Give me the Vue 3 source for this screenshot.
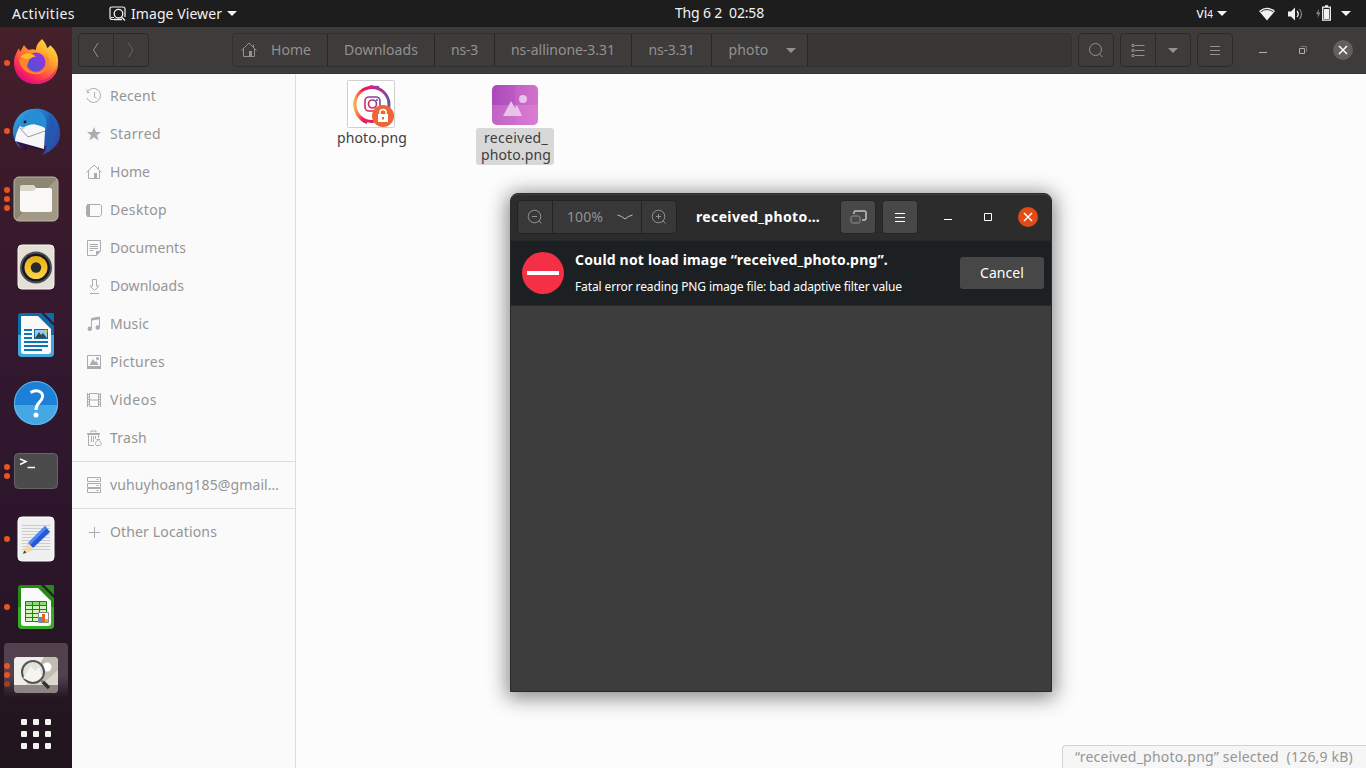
<script setup>
// Spreads a label's letters so that it occupies the given width.
const vFit = {
  mounted(el, { value }) {
    const range = document.createRange()
    range.selectNodeContents(el)
    const natural = range.getBoundingClientRect().width
    el.style.letterSpacing = `${(value - natural) / el.textContent.length}px`
  },
}

const places = [
  { name: 'Recent', w: 46, line: 'M1 3.5V1.5M1 4.5H3.5M1.3 4.2A7 7 0 1 1 1 10M8.5 4V9L10.5 10.5' },
  { name: 'Starred', w: 51, fill: 'M8 1L10 6H15L11 9.2L12.5 14.5L8 11.3L3.5 14.5L5 9.2L1 6H6Z' },
  { name: 'Home', w: 40, line: 'M.5 8.5L8 1L15.5 8.5M2.5 7V14.5H13.5V7M12.5 5V2.5', fill: 'M8 9H11V15H8Z' },
  { name: 'Desktop', w: 57, line: 'M2 2.5H14L15.5 4V12.5L14 14.5H2L.5 13V4Z', fill: 'M1 2H4V15H1Z' },
  { name: 'Documents', w: 76, line: 'M1.5.5H14.5V11L10.5 15.5H1.5ZM3.5 4.5H12M3.5 6.5H12M3.5 8.5H12M3.5 10.5H7', fill: 'M10 11H14.5L10 15.5Z' },
  { name: 'Downloads', w: 74, line: 'M6.5 1.5H10.5V8H13L8.5 12.5L4 8H6.5ZM4 15.5H13' },
  { name: 'Music', w: 39, line: 'M5.5 13V2.5L13.5 1V11M5.5 4L13.5 2.5', fill: 'M1.5 12.8A2 2 0 1 1 6 12.8A2 2 0 1 1 1.5 12.8M9.5 11.5A2 2 0 1 1 14 11.5A2 2 0 1 1 9.5 11.5M5 2.5L14 1V3L5 4.5Z' },
  { name: 'Pictures', w: 55, line: 'M1.5 1.5H14.5V14.5H1.5Z', fill: 'M1 12H15V15H1ZM3.5 11L7 5L9 8L10.5 7L12.5 11ZM10 4.5A1.5 1.5 0 1 1 13 4.5A1.5 1.5 0 1 1 10 4.5' },
  { name: 'Videos', w: 47, line: 'M3.5 1.5H12.5V14.5H3.5ZM3.5 8H12.5M1.5 1V15M14.5 1V15M1 2.5H4M1 5H4M1 7.5H4M1 10H4M1 12.5H4M12 2.5H15M12 5H15M12 7.5H15M12 10H15M12 12.5H15' },
  { name: 'Trash', w: 37, line: 'M1 3.5H14M1.5 4.5H13.5M5 2.5V1H10V2.5M2.5 5V15.5H8M12.5 5V8M5.5 6V12M7.5 6V12M9.5 6V9M10.5 9.5H14M12 10C9 12 8.5 15 11 15.5H13.5C16.5 15 15 12 12.5 10' },
]
const network = { name: 'vuhuyhoang185@gmail…', w: 169, line: 'M1.5.5H14.5V4.5H1.5ZM1.5 6.5H14.5V10.5H1.5ZM1.5 11.5H14.5V15.5H1.5ZM10.5 2.5H12.5M10.5 8.5H12.5M10.5 13.5H12.5' }
const other = { name: 'Other Locations', w: 107, line: 'M3 8.5H14M8.5 3V14' }
const groups = [places, [network], [other]]

const clock = 'Thg 6 2  02:58'
const statusText = '“received_photo.png” selected  (126,9 kB)'

const crumbs = [
  { name: 'Home', w: 40, cell: 95 },
  { name: 'Downloads', w: 74, cell: 107 },
  { name: 'ns-3', w: 27, cell: 60 },
  { name: 'ns-allinone-3.31', w: 104, cell: 137 },
  { name: 'ns-3.31', w: 46, cell: 80 },
  { name: 'photo', w: 40, cell: 96 },
]

const apps = [
  { id: 'firefox', dots: 1 }, { id: 'mail', dots: 1 }, { id: 'files', dots: 3 },
  { id: 'rhythmbox', dots: 0 }, { id: 'writer', dots: 0 }, { id: 'help', dots: 0 },
  { id: 'terminal', dots: 2 }, { id: 'editor', dots: 1 }, { id: 'calc', dots: 1 },
  { id: 'viewer', dots: 3 },
]
</script>

<template>
  <div class="screen">
    <header class="topbar">
      <div class="top-left">
        <span v-fit="63" class="activities">Activities</span>
        <svg class="app-glyph" width="17" height="16" viewBox="0 0 17 16" fill="none" stroke="#f2f2f2">
          <path d="M5 13.5H3Q1 13.5 1 11.5V3Q1 1 3 1H14Q16 1 16 3V11M2 11.5H5" stroke-width="1.2" />
          <circle cx="9.5" cy="7.7" r="4.3" stroke-width="1.3" /><path d="M12.5 11L16 14.5M5 13.5H13" stroke-width="1.3" />
        </svg>
        <span v-fit="91" class="app-name">Image Viewer</span>
        <i class="caret"></i>
      </div>
      <div v-fit="89" class="clock">{{ clock }}</div>
      <div class="top-right">
        <span class="lang">vi<small>4</small></span><i class="caret"></i>
        <svg class="wifi" width="16" height="14" viewBox="0 0 16 14"><path d="M0 4Q8-2.5 16 4L8 13.5Z" fill="#f2f2f2" /><path d="M1.8 4.8Q8 .2 14.2 4.8" fill="none" stroke="#222" stroke-width=".9" /></svg>
        <svg class="sound" width="16" height="14" viewBox="0 0 16 14" fill="none"><path d="M0 4.5H3L7 .5V13.5L3 9.5H0Z" fill="#f2f2f2" /><path d="M9 4Q11.5 7 9 10" stroke="#f2f2f2" stroke-width="1.3" /><path d="M11.5 2Q15.5 7 11.5 12" stroke="#888" stroke-width="1.2" /></svg>
        <svg class="battery" width="16" height="16" viewBox="0 0 16 16"><path d="M3 4L0 9H2L1.5 13L4.5 7.5H2.5Z" fill="#888" /><path d="M6.7 2.2H14.3V15.2H6.7ZM9 1H12" fill="none" stroke="#f2f2f2" stroke-width="1.3" /><path d="M8 4H13V14H8Z" fill="#f2f2f2" /></svg>
        <i class="caret"></i>
      </div>
    </header>

    <div class="desktop">
      <nav class="dock">
        <div v-for="app in apps" :key="app.id" class="dock-item" :class="{ active: app.id === 'viewer' }">
          <div class="dots"><i v-for="n in app.dots" :key="n"></i></div>
          <svg class="app-icon" width="50" height="50" viewBox="0 0 50 50">
            <defs>
              <linearGradient id="fox" x1="1" y1="0" x2=".3" y2="1"><stop offset="0" stop-color="#fff34d" /><stop offset=".4" stop-color="#ffa42b" /><stop offset=".75" stop-color="#ff3d4a" /><stop offset="1" stop-color="#e7037c" /></linearGradient>
              <linearGradient id="globe" x1="0" y1="1" x2="1" y2="0"><stop offset="0" stop-color="#3b5bd5" /><stop offset="1" stop-color="#a62be0" /></linearGradient>
              <linearGradient id="bird" x1="0" y1="0" x2="1" y2="1"><stop offset="0" stop-color="#3cb2e8" /><stop offset=".5" stop-color="#1c64bd" /><stop offset="1" stop-color="#3b3c9c" /></linearGradient>
              <linearGradient id="taupe" x1="0" y1="0" x2="1" y2="1"><stop offset=".5" stop-color="#8d8672" /><stop offset=".51" stop-color="#a19a87" /></linearGradient>
              <linearGradient id="gold" x1="0" y1="0" x2="0" y2="1"><stop offset="0" stop-color="#e5ad12" /><stop offset="1" stop-color="#ffd54a" /></linearGradient>
            </defs>
            <g v-if="app.id === 'firefox'">
              <path d="M31 1C34 4 36 8 36 10C38 9 39 8 39 7C44 11 48 18 47 25C47 38 37 46 25 46C12 46 3 37 3 25C3 18 6 14 8 10L9 14L13 7C15 10 16 11 18 12C20 11 23 11 25 12C25 7 28 4 31 1Z" fill="url(#fox)" />
              <path d="M4 30C8 42 19 44 27 43C37 42 44 35 46 28C45 39 36 46 25 46C14 46 6 40 4 30Z" fill="#e51580" opacity=".65" />
              <circle cx="25" cy="24" r="9.5" fill="url(#globe)" />
              <path d="M8 21C13 18 18 17 23 18C21 19 19 20 18 22C18 24 16 26 16 29C20 36 29 36 34 30C36 27 36 21 33 17C35 18 37 19 38 21C38 33 31 37 24 36C14 36 9 29 8 21Z" fill="#ff852d" />
              <path d="M9 19C15 13 22 15 25 19C21 18 20 22 15 21Z" fill="#ffba26" />
            </g>
            <g v-else-if="app.id === 'mail'">
              <path d="M2 28C1 13 12 3 22 3C37 1 50 12 49 29C49 37 42 45 31 49L34 45L35 40L5 33L10 43Q4 38 2 28Z" fill="url(#bird)" />
              <path d="M5 33L34 41L32 45L17 41L14 45L12 43L13 40L6 37Z" fill="#311047" />
              <path d="M9 20L20 17L33 21Q35 22 34 25L33 43L4 35Q5 26 9 20Z" fill="#f7f7fa" />
              <path d="M9 22L17 31L34 25" fill="none" stroke="#999" />
              <path d="M23 4C34 4 37 14 35 24C33 19 24 17 18 19C14 20 12 23 10 21C9 14 15 7 21 4Z" fill="#278dd4" />
              <path d="M38 9C48 18 45 35 37 47C34 29 41 21 38 9Z" fill="#2558ad" />
              <path d="M9 20L14 22L11 24Z" fill="#b9d8ea" /><circle cx="14" cy="16" r="1.4" fill="#122" />
            </g>
            <g v-else-if="app.id === 'files'"><rect x="3" y="3" width="44" height="44" rx="5" fill="url(#taupe)" stroke="#bcb6a6" /><path d="M11 11H23L25 14H38Q41 14 41 17V36Q41 38 38 38H12Q9 38 9 35V13Q9 11 11 11Z" fill="#d9d5c8" /><path d="M9 17H22Q24 17 25 14H39Q41 14 41 17V36Q41 38 38 38H12Q9 38 9 35Z" fill="#faf9f7" /></g>
            <g v-else-if="app.id === 'rhythmbox'"><rect x="7" y="3" width="36" height="44" rx="4" fill="#e5e0d5" stroke="#f6f4f0" /><circle cx="25" cy="25.5" r="16" fill="#4c4f58" /><circle cx="25" cy="25.5" r="14" fill="#171923" /><circle cx="25" cy="25.5" r="11.5" fill="url(#gold)" /><circle cx="25" cy="25.5" r="5.2" fill="#27292b" /></g>
            <g v-else-if="app.id === 'writer' || app.id === 'calc'" :class="app.id">
              <path class="frame" d="M10 3H30L43 16V43Q43 47 39 47H11Q7 47 7 43V6Q7 3 10 3Z" /><path class="lower" d="M7 25H43V43Q43 47 39 47H11Q7 47 7 43Z" />
              <path d="M11 6H27L40 19V41Q40 44 37 44H13Q10 44 10 41V7Q10 6 11 6Z" fill="#fafafa" /><path class="frame" d="M33 3H42Q43 3 43 4V13Z" />
              <template v-if="app.id === 'writer'"><path d="M13 20H21M13 24H21M13 28H21M13 32H37M13 36H37M13 40H31" stroke="#0c75b5" stroke-width="2" /><rect x="23.5" y="19.5" width="13" height="9" fill="#8bd0f4" stroke="#0c6aa5" /><path d="M24 28L28 22L30 25L32 23L36 28Z" fill="#444" /><circle cx="35" cy="21" r="1.5" fill="#f6c421" /></template>
              <template v-else><path d="M14.5 19.5H35.5V39.5H14.5Z" fill="#d3f5bf" stroke="#228010" /><path d="M15 20H35V23H15Z" fill="#8bdc78" /><path d="M14 23.5H36M14 27.5H36M14 31.5H36M14 35.5H36M21.5 20V40M28.5 20V40" stroke="#228010" /><path d="M27.5 30.5H37.5V40.5H27.5Z" fill="#fff" stroke="#888" /><path d="M29.5 40V35" stroke="#2ba3df" stroke-width="3" /><path d="M32.5 40V32" stroke="#e9612c" stroke-width="3" /><path d="M35.5 40V37" stroke="#ecb700" stroke-width="3" /></template>
            </g>
            <g v-else-if="app.id === 'help'"><circle cx="25" cy="25" r="22" fill="#1d80d8" /><path d="M3 27A22 20 0 0 0 47 27Z" fill="#46a7e5" /><circle cx="25" cy="25" r="21.5" fill="none" stroke="#65b9ec" /><path d="M19.5 14.5C25 11 32 13 31.5 19C31 24 25 24 25 32" fill="none" stroke="#fff" stroke-width="3" /><circle cx="25" cy="37" r="2.5" fill="#fff" /></g>
            <g v-else-if="app.id === 'terminal'"><rect x="3.5" y="7.5" width="43" height="35" rx="4" fill="#4b4b4b" stroke="#666" /><path d="M9 13L15 15.5L9 18.5M16.5 21.5H24" fill="none" stroke="#fff" stroke-width="1.5" /></g>
            <g v-else-if="app.id === 'editor'"><rect x="7" y="3" width="36" height="44" rx="4" fill="#f0f0f0" stroke="#fff" /><path d="M11 11.5H39M11 14.5H39M11 17.5H39M11 20.5H39M11 23.5H39M11 26.5H39M11 29.5H39M11 32.5H39M11 35.5H39" stroke="#ccc" /><path d="M12 40L15 32L21 37Z" fill="#f4d8b0" /><path d="M12 40L13.2 36.5L15.5 38.5Z" fill="#443" /><path d="M17 29L34 12L39 18L22 34Z" fill="#255ad5" /><path d="M17 29L34 12L36 14L19 31Z" fill="#508af1" /><path d="M17 29L22 34L18 36L14.5 33Z" fill="#f4d8b0" /></g>
            <g v-else><path d="M7 7H43Q47 7 47 11V39Q47 43 43 43H7Q3 43 3 39V11Q3 7 7 7Z" fill="#dad7ce" /><path d="M30 7H43Q47 7 47 11V20L30 35Z" fill="#c1bdaf" /><path d="M3 11Q3 7 7 7H33L15 35H3Z" fill="#efeee9" /><circle cx="36" cy="17" r="4.5" fill="#fff" /><circle cx="22" cy="22" r="11" fill="#e4e2dc" stroke="#555" stroke-width="2" /><path d="M12 28L20 16L24 21L28 17L31 26Q24 35 14 29Z" fill="#f6f5f2" /><path d="M30 30L33 33" stroke="#777" stroke-width="2" /><path d="M3 35H47V39Q47 43 43 43H7Q3 43 3 39Z" fill="#30202b" opacity=".45" /><path d="M32 32L38 38" stroke="#333" stroke-width="3.5" /></g>
          </svg>
        </div>
        <div class="app-grid"><i v-for="n in 9" :key="n"></i></div>
      </nav>

      <section class="files">
        <header class="files-head">
          <div class="button-group nav-buttons"><button><svg width="8" height="16" viewBox="0 0 8 16"><path d="M6 1L1.5 8L6 15" /></svg></button><button class="dim"><svg width="8" height="16" viewBox="0 0 8 16"><path d="M1.5 1L6 8L1.5 15" /></svg></button></div>
          <div class="pathbar">
            <div v-for="(crumb, i) in crumbs" :key="crumb.name" class="crumb" :style="{ width: crumb.cell + 'px' }">
              <svg v-if="i === 0" class="house" width="16" height="16" viewBox="0 0 16 16"><path :d="places[2].line" /><path :d="places[2].fill" class="solid" /></svg>
              <span v-fit="crumb.w">{{ crumb.name }}</span>
              <i v-if="i === 5" class="caret"></i>
            </div>
          </div>
          <button class="single search"><svg width="16" height="16" viewBox="0 0 16 16"><circle cx="7.5" cy="7.5" r="6" /><path d="M11.5 12L14.5 15" /></svg></button>
          <div class="button-group view-buttons"><button><svg width="14" height="13" viewBox="0 0 14 13"><path d="M4 1.5H13.5M4 6.5H13.5M4 11.5H13.5M1 .5H3V2.5H1ZM1 5.5H3V7.5H1ZM1 10.5H3V12.5H1Z" /></svg></button><button><i class="caret"></i></button></div>
          <button class="single"><svg width="12" height="11" viewBox="0 0 12 11"><path d="M1 1.5H11M1 5.5H11M1 9.5H11" /></svg></button>
          <div class="controls files-controls"><svg width="8" height="8" viewBox="0 0 8 8"><path d="M0 6.5H8" /></svg><svg width="8" height="8" viewBox="0 0 8 8"><path d="M.5 2.5H5.5V7.5H.5Z" /><path class="back-frame" d="M2 .5H7.5V6" /></svg><div class="close"><svg width="10" height="10" viewBox="0 0 10 10"><path d="M1 1L9 9M9 1L1 9" /></svg></div></div>
        </header>
        <div class="files-body">
          <aside class="sidebar">
            <div v-for="(group, g) in groups" :key="g" class="group">
              <div v-for="p in group" :key="p.name" class="place">
                <svg width="16" height="16" viewBox="0 0 16 16"><path v-if="p.line" :d="p.line" /><path v-if="p.fill" :d="p.fill" class="solid" /></svg>
                <span v-fit="p.w">{{ p.name }}</span>
              </div>
            </div>
          </aside>
          <main class="content">
            <div class="file first">
              <svg width="48" height="48" viewBox="0 0 48 48">
                <defs><linearGradient id="insta" x1="0" y1="1" x2="1" y2="0"><stop offset="0" stop-color="#e0245c" /><stop offset=".5" stop-color="#c42a80" /><stop offset="1" stop-color="#674ca6" /></linearGradient><linearGradient id="ring"><stop offset="0" stop-color="#ffb34e" /><stop offset=".35" stop-color="#f51755" /><stop offset=".7" stop-color="#c3298b" /><stop offset="1" stop-color="#6553a6" /></linearGradient></defs>
                <rect x=".5" y=".5" width="47" height="47" rx="1" fill="#fff" stroke="#d0d0ce" />
                <circle cx="25" cy="24.5" r="17" fill="none" stroke="url(#ring)" stroke-width="3" /><path d="M32 7Q10 5 7 24Q9 39 20 43M23 6L31 8M9 34L19 41" fill="none" stroke="url(#ring)" stroke-width="2" />
                <rect x="18" y="17" width="15" height="14" rx="4" fill="none" stroke="url(#insta)" stroke-width="1.6" /><circle cx="25.5" cy="24" r="4" fill="none" stroke="url(#insta)" stroke-width="1.7" /><circle cx="30" cy="20" r="1" fill="#7946a2" />
                <circle cx="36" cy="36" r="11" fill="#eb6536" /><path d="M33 35V32Q33 29.5 36 29.5Q39 29.5 39 32V35" fill="none" stroke="#fff" stroke-width="1.5" /><path d="M31 34H41V42H31ZM35 37V39.5H37V37Z" fill="#fff" fill-rule="evenodd" />
              </svg>
              <div class="file-name"><span v-fit="70">photo.png</span></div>
            </div>
            <div class="file second">
              <svg width="46" height="48" viewBox="0 0 46 48"><defs><linearGradient id="pink"><stop offset="0" stop-color="#aa49b9" /><stop offset="1" stop-color="#cf6bcb" /></linearGradient></defs><rect y="5" width="46" height="40" rx="5" fill="url(#pink)" /><path d="M0 25H46V40Q46 45 41 45H5Q0 45 0 40Z" fill="#e994dc" opacity=".35" /><path d="M23 5H41Q46 5 46 10V40Q46 45 41 45H23Z" fill="#e98bdb" opacity=".15" /><path d="M11 36L19 21L23 28L25 25L30 36Z" fill="#e9c2e9" /><circle cx="31" cy="19" r="4" fill="#e9c2e9" /></svg>
              <div class="file-name selected"><span v-fit="64">received_</span><span v-fit="70">photo.png</span></div>
            </div>
            <div class="status"><span v-fit="278">{{ statusText }}</span></div>
          </main>
        </div>
      </section>
    </div>

    <section class="viewer-window">
      <header class="viewer-head">
        <div class="button-group zoom"><button><svg width="16" height="16" viewBox="0 0 16 16"><circle cx="7.5" cy="7.5" r="6.3" /><path d="M5 7.5H10M12 12L14.5 14.5" /></svg></button><button class="percent"><span v-fit="36">100%</span><svg width="16" height="8" viewBox="0 0 16 8"><path d="M.5 2Q5 3 8 6Q11 3 15.5 2" /></svg></button><button><svg width="16" height="16" viewBox="0 0 16 16"><circle cx="7.5" cy="7.5" r="6.3" /><path d="M5 7.5H10M7.5 5V10M12 12L14.5 14.5" /></svg></button></div>
        <div class="title"><span v-fit="124">received_photo…</span></div>
        <button class="single lit gallery"><svg width="17" height="14" viewBox="0 0 17 14"><path d="M4 4V2Q4 1 5 1H15Q16 1 16 2V9Q16 10 15 10H12" /><rect class="muted" x="1" y="6" width="9" height="7" rx="1.5" /></svg></button>
        <button class="single lit"><svg width="12" height="11" viewBox="0 0 12 11"><path d="M1 1.5H11M1 5.5H11M1 9.5H11" /></svg></button>
        <div class="controls viewer-controls"><svg width="8" height="8" viewBox="0 0 8 8"><path d="M0 6.5H8" /></svg><svg width="8" height="8" viewBox="0 0 8 8"><path d="M.5.5H7.5V7.5H.5Z" /></svg><div class="close orange"><svg width="10" height="10" viewBox="0 0 10 10"><path d="M1 1L9 9M9 1L1 9" /></svg></div></div>
      </header>
      <div class="alert">
        <div class="no-entry"><i></i></div>
        <div class="message"><strong><span v-fit="313">Could not load image “received_photo.png”.</span></strong><p><span v-fit="327">Fatal error reading PNG image file: bad adaptive filter value</span></p></div>
        <button class="cancel"><span v-fit="44">Cancel</span></button>
      </div>
    </section>
  </div>
</template>

<style>
body { margin: 0; overflow: hidden; }
</style>

<style scoped>
* { box-sizing: border-box; }
.screen { position: relative; width: 1366px; height: 768px; overflow: hidden; font: 14px/20px "Noto Sans", sans-serif; background: #fcfcfc; }
span, .clock { white-space: pre; }
svg { display: block; flex: none; }
button { font: inherit; padding: 0; margin: 0; border: 0; background: none; color: inherit; display: flex; align-items: center; justify-content: center; }
.caret { display: block; border: 5px solid transparent; border-top-color: currentColor; border-bottom: 0; flex: none; }
.topbar { height: 27px; background: #1d1d1d; color: #f2f2f2; display: flex; align-items: center; }
.top-left { display: flex; align-items: center; padding-left: 12px; width: 675px; }
.activities { width: 63px; margin-right: 34px; }
.app-glyph { margin-right: 5px; }
.app-name { width: 91px; margin-right: 5px; }
.clock { width: 90px; margin-top: -1px; }
.top-right { flex: 1; display: flex; align-items: center; justify-content: flex-end; padding-right: 15px; }
.lang small { font-size: 10px; }
.lang { margin-right: 4px; }
.wifi { margin: 0 13px 0 32px; }
.sound { margin-right: 12px; }
.battery { margin-right: 9px; margin-top: -2px; }

.desktop { display: flex; height: 741px; }
.dock { width: 72px; padding-top: 2px; background: linear-gradient(#46202a, #3b1b2a 18%, #33182f 42%, #2a1529 75%, #21151d); }
.dock-item { position: relative; height: 68px; display: flex; align-items: center; justify-content: center; }
.active::before { content: ""; position: absolute; left: 4px; top: 2px; width: 64px; height: 55px; border-radius: 4px 4px 0 0; background: linear-gradient(#51424e 60%, #51424e00); }
.dots { position: absolute; z-index: 1; left: 4px; top: 0; bottom: 0; display: flex; flex-direction: column; justify-content: center; gap: 3px; }
.dots i { width: 6px; height: 6px; border-radius: 50%; background: #e95420; }
.active .dots i:last-child { background: #994125; }
.app-icon { position: relative; }
.writer .frame { fill: #0c6da8; } .writer .lower { fill: #42a7da; }
.calc .frame { fill: #258b15; } .calc .lower { fill: #38ac29; }
.app-grid { display: grid; grid-template-columns: repeat(3, 6px); gap: 6px; width: 30px; margin: 10px auto 0; }
.app-grid i { width: 6px; height: 6px; border-radius: 1px; background: #f2f2ee; }

.files { flex: 1; display: flex; flex-direction: column; }
.files-head { height: 47px; padding: 6px 13px 0 6px; display: flex; align-items: flex-start; background: #3e3c3a; color: #929190; border-bottom: 1px solid #383634; }
.files-head svg, .sidebar svg, .viewer-head svg { fill: none; stroke: currentColor; stroke-width: 1; }
.files-head .solid, .sidebar .solid { fill: currentColor; stroke: none; }
.button-group, .single, .pathbar { height: 34px; border: 1px solid #2c2a28; border-radius: 4px; display: flex; flex: none; }
.button-group > button { flex: 1; }
.button-group > button + button { border-left: 1px solid #2c2a28; }
.single { width: 36px; }
.nav-buttons { width: 71px; margin-right: 83px; }
.nav-buttons .dim { color: #686765; }
.pathbar { width: 840px; background: #393735; border-color: #32302e; margin-right: 6px; overflow: hidden; }
.crumb { display: flex; align-items: center; justify-content: center; background: #3e3c3a; border-right: 1px solid #292725; flex: none; }
.crumb:first-child { padding-right: 8px; }
.crumb:last-child { padding-left: 5px; }
.house { margin: 0 14px 0 0; }
.crumb .caret { margin-left: 17px; }
.search { margin-right: 6px; }
.view-buttons { width: 71px; margin-right: 6px; }
.controls { display: flex; align-items: center; height: 34px; margin-left: auto; }
.files-controls { gap: 32px; color: #b2b1ae; }
.files-controls .back-frame { stroke: #777572; }
.files-controls .close { margin-left: -6px; background: #62605f; color: #fff; }
.close { width: 20px; height: 20px; border-radius: 50%; display: flex; align-items: center; justify-content: center; }
.controls .close svg { stroke-width: 1.5; }

.files-body { flex: 1; display: flex; }
.sidebar { width: 224px; background: #fafafa; border-right: 1px solid #dcdcdc; color: #959595; padding-top: 3px; }
.group { padding-bottom: 4px; }
.group + .group { border-top: 1px solid #dcdcdc; padding-top: 4px; }
.place { height: 38px; padding-left: 14px; display: flex; align-items: center; gap: 8px; }
.place svg { color: #acacac; }
.content { position: relative; flex: 1; background: #fcfcfc; color: #3e3e3e; display: flex; align-items: flex-start; }
.file { display: flex; flex-direction: column; align-items: center; margin-top: 6px; width: 78px; }
.first { margin-left: 36px; }
.second { margin-left: 66px; }
.file-name { line-height: 17px; display: flex; flex-direction: column; align-items: center; padding: 1px 3px; margin-left: 2px; }
.second .file-name { width: 78px; margin-left: 0; padding-left: 5px; }
.selected { background: #d8d8d8; border-radius: 3px; height: 37px; }
.status { position: absolute; right: 0; bottom: 0; width: 304px; height: 23px; border: 1px solid #d2d2d2; border-right: 0; border-bottom: 0; border-radius: 4px 0 0; background: #f6f6f6; color: #959595; padding-left: 12px; line-height: 22px; }

.viewer-window { position: absolute; left: 510px; top: 193px; width: 542px; height: 499px; background: #3d3d3d; border: 1px solid #292929; border-radius: 8px 8px 0 0; box-shadow: 0 3px 20px 3px #0007; }
.viewer-head { height: 46px; border-radius: 7px 7px 0 0; background: #2c2c2c; border-top: 1px solid #404040; padding: 5px 13px 0 6px; display: flex; align-items: flex-start; color: #fff; }
.zoom { width: 160px; background: #383838; border-color: #232323; color: #929292; }
.zoom > button { flex: 0 0 35px; }
.zoom > button:first-child { flex-basis: 34px; }
.zoom > .percent { flex: 1; gap: 14px; padding-left: 6px; }
.zoom > button + button { border-color: #232323; }
.viewer-head .percent svg { color: #bbb; }
.title { width: 125px; margin-left: 19px; height: 34px; display: flex; align-items: center; font-weight: 700; }
.lit { background: #484848; border-color: #252525; margin-right: 6px; }
.gallery { margin-left: 19px; }
.muted { stroke: #929292; }
.viewer-controls { gap: 32px; }
.viewer-controls .close { margin-left: -6px; }
.orange { background: #e24a16; }
.alert { height: 66px; background: #1c2022; border-top: 1px solid #252a2b; border-bottom: 1px solid #2b2e2f; padding: 0 7px 0 11px; display: flex; align-items: center; color: #fff; }
.no-entry { width: 42px; height: 42px; border-radius: 50%; background: #f52f45; display: flex; align-items: center; justify-content: center; flex: none; }
.no-entry i { width: 32px; height: 4px; background: #fff; }
.message { margin-left: 11px; height: 64px; padding-top: 9px; }
strong { display: block; font-size: 14px; }
.message p { margin: 8px 0 0; font-size: 12px; line-height: 18px; }
.cancel { width: 84px; height: 32px; margin-left: auto; background: #474747; border-radius: 3px; }
</style>
